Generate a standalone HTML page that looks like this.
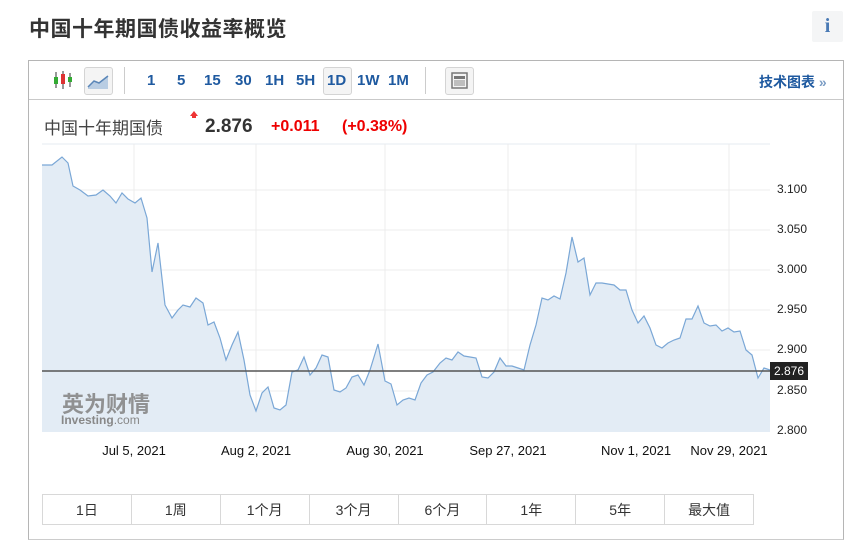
<!DOCTYPE html>
<html><head><meta charset="utf-8"><style>
body{margin:0;width:859px;height:554px;background:#fff;font-family:"Liberation Sans","Noto Sans CJK SC",sans-serif;position:relative;overflow:hidden}
.a{position:absolute}
h1{position:absolute;left:29px;top:13px;margin:0;font-size:21px;font-weight:bold;color:#333;letter-spacing:0.5px}
.info{left:812px;top:11px;width:31px;height:31px;background:#f4f5f6;border-radius:2px;color:#4a7ab5;font:bold 20px "Liberation Serif",serif;text-align:center;line-height:31px}
.box{left:28px;top:60px;width:814px;height:478px;border:1px solid #b5b5b5;border-bottom-color:#ccc}
.tb{left:29px;top:99px;width:814px;height:1px;background:#c9c9c9}
.t{position:absolute;top:72px;font-size:15px;font-weight:bold;color:#1f5aa0}
.sep{position:absolute;width:1px;height:27px;background:#ccc;top:67px}
.btn{position:absolute;border:1px solid #d4d4d4;border-radius:3px;background:#f4f4f4}
.per{left:42px;top:494px;width:712px;height:31px;display:flex;border:1px solid #d8d8d8;box-sizing:border-box}
.per div{flex:1;border-right:1px solid #d8d8d8;text-align:center;line-height:30px;font-size:14px;color:#333}
.per div:last-child{border-right:none}
.yl{position:absolute;left:777px;font-size:12px;color:#222}
.xl{position:absolute;top:443px;font-size:13px;color:#111;transform:translateX(-50%)}
</style></head><body>
<h1>中国十年期国债收益率概览</h1>
<div class="a info">i</div>
<div class="a box"></div>
<div class="a tb"></div>
<svg class="a" style="left:52px;top:70px" width="22" height="20"><g stroke="#333" stroke-width="1"><line x1="4" y1="2" x2="4" y2="18"/><line x1="11" y1="1" x2="11" y2="19"/><line x1="18" y1="3" x2="18" y2="17"/></g><rect x="2" y="7" width="4" height="7" fill="#3a3"/><rect x="9" y="4" width="4" height="10" fill="#d33"/><rect x="16" y="7" width="4" height="5" fill="#3a3"/></svg>
<div class="btn" style="left:84px;top:67px;width:27px;height:26px"><svg width="27" height="26"><path d="M3 19 L9 13 L14 15 L23 8 L23 21 L3 21Z" fill="#b9cde3"/><path d="M3 19 L9 13 L14 15 L23 8" stroke="#5a86b8" stroke-width="1.5" fill="none"/></svg></div>
<div class="sep" style="left:124px"></div>
<span class="t" style="left:147px">1</span><span class="t" style="left:177px">5</span><span class="t" style="left:204px">15</span><span class="t" style="left:235px">30</span><span class="t" style="left:265px">1H</span><span class="t" style="left:296px">5H</span>
<div class="btn" style="left:323px;top:67px;width:27px;height:26px"></div><span class="t" style="left:327px">1D</span>
<span class="t" style="left:357px">1W</span><span class="t" style="left:388px">1M</span>
<div class="sep" style="left:425px"></div>
<div class="btn" style="left:445px;top:67px;width:27px;height:26px"><svg width="27" height="26"><rect x="6" y="5" width="15" height="15" fill="none" stroke="#777" stroke-width="1.5"/><rect x="8" y="8" width="11" height="3" fill="#777"/><g stroke="#888"><line x1="8" y1="13" x2="19" y2="13"/><line x1="8" y1="15" x2="19" y2="15"/><line x1="8" y1="17" x2="19" y2="17"/></g></svg></div>
<span class="t" style="left:759px;font-size:14px">技术图表 <span style="color:#7a9cc4">»</span></span>
<div class="a" style="left:44px;top:114px;font-size:17px;color:#444">中国十年期国债</div>
<div class="a" style="left:190px;top:111px;width:0;height:0;border:4px solid transparent;border-bottom:5px solid #e33;border-top:none"></div>
<div class="a" style="left:192px;top:115px;width:4px;height:3px;background:#e33"></div>
<div class="a" style="left:205px;top:116px;font-size:19px;color:#333;font-weight:bold">2.876</div>
<div class="a" style="left:271px;top:118px;font-size:16px;color:#e00;font-weight:bold">+0.011</div>
<div class="a" style="left:342px;top:118px;font-size:16px;color:#e00;font-weight:bold">(+0.38%)</div>
<svg class="a" style="left:0;top:0" width="859" height="554">
<rect x="42" y="144" width="728" height="288" fill="#fff"/>
<line x1="42" y1="144" x2="770" y2="144" stroke="#e6ebf0"/>
<g stroke="#ececec"><line x1="134" y1="144" x2="134" y2="432"/><line x1="256" y1="144" x2="256" y2="432"/><line x1="385" y1="144" x2="385" y2="432"/><line x1="508" y1="144" x2="508" y2="432"/><line x1="636" y1="144" x2="636" y2="432"/><line x1="729" y1="144" x2="729" y2="432"/>
<line x1="42" y1="190" x2="770" y2="190"/><line x1="42" y1="230" x2="770" y2="230"/><line x1="42" y1="270" x2="770" y2="270"/><line x1="42" y1="310" x2="770" y2="310"/><line x1="42" y1="350" x2="770" y2="350"/><line x1="42" y1="391" x2="770" y2="391"/></g>
<polygon fill="#e3ecf5" points="42,432 42,165 52,165 62,157 68,163 73,186 80,190 88,196 96,195 103,190 110,196 116,203 122,193 128,199 135,203 141,198 147,218 152,272 158,243 165,305 172,318 178,310 183,305 190,307 196,298 203,303 208,325 214,322 220,338 226,360 232,345 238,332 244,360 250,395 256,411 262,393 268,387 274,408 280,410 286,405 292,372 298,370 304,357 310,375 316,368 322,355 328,357 334,390 340,392 346,388 352,377 358,375 364,385 370,370 378,344 385,381 391,384 397,405 403,400 409,398 415,400 421,383 427,375 433,372 440,363 446,358 452,360 458,352 464,356 470,357 476,358 482,377 488,378 494,372 500,358 506,366 512,366 518,368 524,370 530,345 536,325 542,298 548,300 554,296 560,299 566,273 572,237 578,262 584,258 590,295 596,283 602,283 608,284 614,285 620,290 626,290 632,310 638,323 644,316 650,328 656,345 662,348 668,343 674,340 680,338 686,319 692,319 698,306 704,323 710,326 716,325 722,331 728,328 734,332 740,331 746,350 752,355 758,378 764,368 770,370 770,432"/>
<polyline fill="none" stroke="#7aa7d6" stroke-width="1.2" points="42,165 52,165 62,157 68,163 73,186 80,190 88,196 96,195 103,190 110,196 116,203 122,193 128,199 135,203 141,198 147,218 152,272 158,243 165,305 172,318 178,310 183,305 190,307 196,298 203,303 208,325 214,322 220,338 226,360 232,345 238,332 244,360 250,395 256,411 262,393 268,387 274,408 280,410 286,405 292,372 298,370 304,357 310,375 316,368 322,355 328,357 334,390 340,392 346,388 352,377 358,375 364,385 370,370 378,344 385,381 391,384 397,405 403,400 409,398 415,400 421,383 427,375 433,372 440,363 446,358 452,360 458,352 464,356 470,357 476,358 482,377 488,378 494,372 500,358 506,366 512,366 518,368 524,370 530,345 536,325 542,298 548,300 554,296 560,299 566,273 572,237 578,262 584,258 590,295 596,283 602,283 608,284 614,285 620,290 626,290 632,310 638,323 644,316 650,328 656,345 662,348 668,343 674,340 680,338 686,319 692,319 698,306 704,323 710,326 716,325 722,331 728,328 734,332 740,331 746,350 752,355 758,378 764,368 770,370"/>
<line x1="42" y1="371" x2="770" y2="371" stroke="#555" stroke-width="1.5"/>
<rect x="770" y="362" width="38" height="18" fill="#222"/>
<text x="774" y="375" fill="#fff" font-size="12" font-family="Liberation Sans">2.876</text>
<text x="62" y="412" fill="#888" font-size="22" font-weight="bold" font-family="Noto Sans CJK SC,sans-serif" opacity="0.9">英为财情</text>
<text x="61" y="424" fill="#888" font-size="12" font-weight="bold" font-family="Liberation Sans">Investing<tspan font-weight="normal">.com</tspan></text>
</svg>
<div class="yl" style="top:182px">3.100</div><div class="yl" style="top:222px">3.050</div><div class="yl" style="top:262px">3.000</div><div class="yl" style="top:302px">2.950</div><div class="yl" style="top:342px">2.900</div><div class="yl" style="top:383px">2.850</div><div class="yl" style="top:423px">2.800</div>
<div class="xl" style="left:134px">Jul 5, 2021</div><div class="xl" style="left:256px">Aug 2, 2021</div><div class="xl" style="left:385px">Aug 30, 2021</div><div class="xl" style="left:508px">Sep 27, 2021</div><div class="xl" style="left:636px">Nov 1, 2021</div><div class="xl" style="left:729px">Nov 29, 2021</div>
<div class="a per"><div>1日</div><div>1周</div><div>1个月</div><div>3个月</div><div>6个月</div><div>1年</div><div>5年</div><div>最大值</div></div>
</body></html>
